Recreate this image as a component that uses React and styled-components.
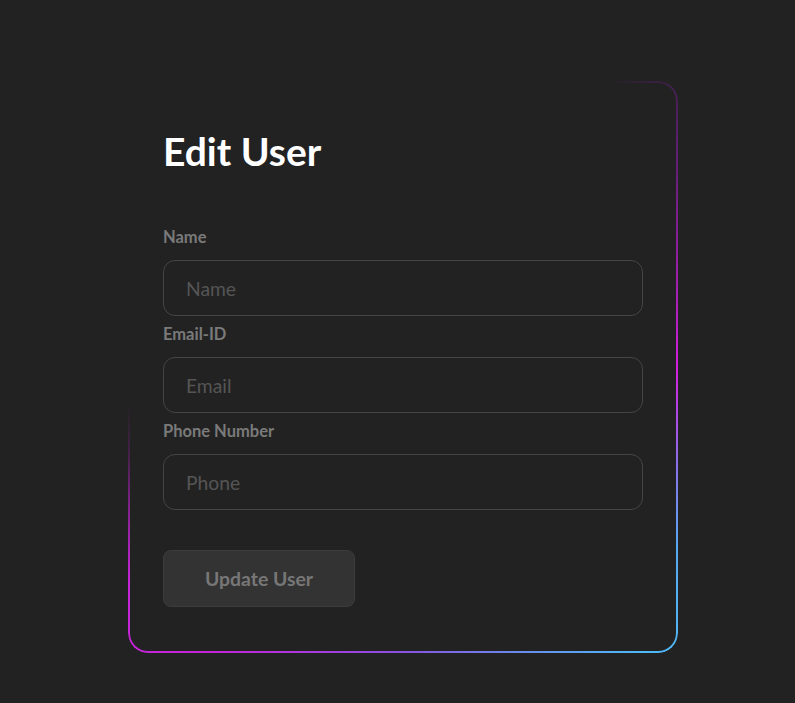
import React from "react";
import styled, { createGlobalStyle } from "styled-components";

const Global = createGlobalStyle`
  html, body { margin: 0; padding: 0; background: #222222; }
  body { font-family: Lato, "Noto Sans", sans-serif; }
`;

const Page = styled.div`
  min-height: 703px;
  box-sizing: border-box;
  padding: 81px 0 0 128px;
  display: flex;
  align-items: flex-start;
`;

const Card = styled.form`
  position: relative;
  width: 550px;
  box-sizing: border-box;
  padding: 47px 36px 46px 35px;
  border-radius: 20px;
  display: flex;
  flex-direction: column;

  &::before {
    content: "";
    position: absolute;
    inset: 0;
    border-radius: 20px;
    padding: 2px;
    background: conic-gradient(
      from 0deg at 50% 50%,
      transparent 0deg,
      transparent 36deg,
      rgba(110, 30, 135, 0.75) 50deg,
      #d41fe0 90deg,
      #55aaf2 124deg,
      #4fb8f5 140deg,
      #8a52e2 180deg,
      #c424d8 214deg,
      #c624d8 232deg,
      rgba(160, 30, 170, 0.3) 252deg,
      transparent 262deg,
      transparent 360deg
    );
    -webkit-mask: linear-gradient(#000 0 0) content-box, linear-gradient(#000 0 0);
    -webkit-mask-composite: xor;
    mask: linear-gradient(#000 0 0) content-box exclude, linear-gradient(#000 0 0);
    pointer-events: none;
  }
`;

const Title = styled.h1`
  margin: 0 0 54px;
  font-size: 39px;
  font-weight: 700;
  line-height: 46px;
  color: #ffffff;
`;

const Field = styled.div`
  display: flex;
  flex-direction: column;
  margin-bottom: 9px;
`;

const Label = styled.label`
  font-size: 16.5px;
  font-weight: 700;
  line-height: 19px;
  color: #7a7a7a;
  margin-bottom: 13px;
`;

const Input = styled.input`
  box-sizing: border-box;
  width: 480px;
  height: 56px;
  padding: 0 22px;
  background: transparent;
  border: 1px solid #454545;
  border-radius: 12px;
  font-family: Lato, "Noto Sans", sans-serif;
  font-size: 19.3px;
  color: #ddd;
  outline: none;

  &::placeholder {
    color: #555555;
  }
`;

const Button = styled.button`
  margin-top: 31px;
  align-self: flex-start;
  width: 192px;
  height: 57px;
  padding-bottom: 2px;
  background: #333333;
  border: 1px solid #3c3c3c;
  border-radius: 8px;
  font-family: Lato, "Noto Sans", sans-serif;
  font-size: 19.4px;
  font-weight: 700;
  color: #777777;
  cursor: pointer;
`;

const fields = [
  { id: "name", label: "Name", placeholder: "Name", type: "text" },
  { id: "email", label: "Email-ID", placeholder: "Email", type: "email" },
  { id: "phone", label: "Phone Number", placeholder: "Phone", type: "tel" },
];

export default function App() {
  return (
    <>
      <Global />
      <Page>
        <Card onSubmit={(e) => e.preventDefault()}>
          <Title>Edit User</Title>
          {fields.map((f) => (
            <Field key={f.id}>
              <Label htmlFor={f.id}>{f.label}</Label>
              <Input id={f.id} type={f.type} placeholder={f.placeholder} />
            </Field>
          ))}
          <Button type="submit">Update User</Button>
        </Card>
      </Page>
    </>
  );
}
